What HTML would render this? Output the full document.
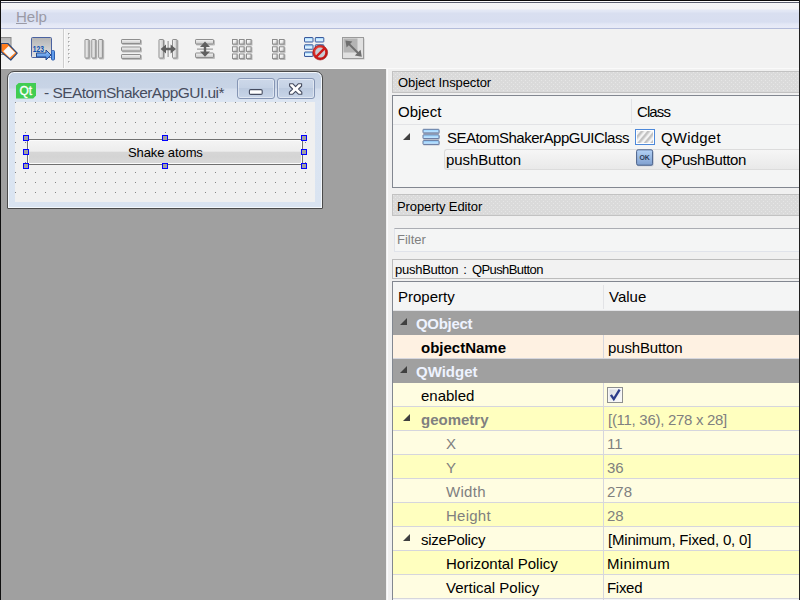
<!DOCTYPE html>
<html>
<head>
<meta charset="utf-8">
<title>Qt Designer</title>
<style>
html,body{margin:0;padding:0;}
body{width:800px;height:600px;overflow:hidden;position:relative;background:#f0f0f0;font-family:"Liberation Sans",sans-serif;font-size:15px;color:#000;}
.abs{position:absolute;}
.t{position:absolute;white-space:nowrap;line-height:1;}
/* top */
#topline{left:0;top:0;width:800px;height:1px;background:#080808;}
#leftline{left:0;top:0;width:1px;height:600px;background:#101010;}
#menubar{left:1px;top:3px;width:799px;height:25px;background:linear-gradient(#f5f6f7 0px,#f3f4f6 6px,#e4e8f5 7px,#e0e5f4 9px,#d9dff0 10px,#d8def0 19px,#e3e7f5 21px,#e8ebf7 25px);border-bottom:1px solid #b4bcda;}
#toolbar{left:1px;top:29px;width:799px;height:39px;background:#f2f2f2;border-bottom:1px solid #fafafa;}
#mdi{left:1px;top:69px;width:385px;height:531px;background:#a0a0a0;}
/* sub window */
#sub{left:7px;top:71px;width:314px;height:136px;border:1px solid #4a4a4a;border-radius:7px 7px 1px 1px;background:linear-gradient(#c4d1e3 0px,#c8d4e6 16px,#d4deed 17px,#dce5f2 30px,#dae4f1 136px);box-shadow:inset 0 0 0 1px #f4f8fc;}
#form{left:15px;top:102px;width:300px;height:100px;background-color:#f0f0f0;background-image:radial-gradient(circle at 0.5px 0.5px,#858585 0.55px,rgba(0,0,0,0) 0.85px);background-size:10px 10px;}
.wbtn{border:1px solid #8595b4;border-radius:3px;box-shadow:inset 0 0 0 1px rgba(255,255,255,.45);background:linear-gradient(#cdd8e9 0%,#c5d2e5 45%,#bccadf 50%,#c8d5e8 100%);}
#pbtn{left:27px;top:139px;width:274px;height:24px;border:1px solid #707070;border-radius:2px;background:linear-gradient(#f4f4f4 0%,#ededed 46%,#d6d6d6 52%,#d4d4d4 70%,#dadada 100%);box-shadow:inset 0 0 0 1px #fbfbfb;}
.h{position:absolute;width:4px;height:4px;border:1px solid #0000ff;background:#a0a0a0;}
/* docks */
.dockt{left:392px;width:407px;height:20px;background-color:#dadada;border:1px solid #c2c2c2;border-right:none;background-image:radial-gradient(circle at 0.5px 0.5px,#e6e6e6 0.6px,rgba(0,0,0,0) 0.9px),radial-gradient(circle at 2.5px 2.5px,#e6e6e6 0.6px,rgba(0,0,0,0) 0.9px);background-size:4px 4px;}
.view{left:392px;width:408px;background:#f4f5f5;border:1px solid #828790;border-right:none;}
.row{position:absolute;left:393px;width:407px;height:23px;border-bottom:1px solid #d6d6dd;}
.grp{position:absolute;left:393px;width:407px;height:24px;background:#a0a0a0;}
.vsep{position:absolute;left:603px;width:1px;background:#d6d6dd;}
.arrow{position:absolute;width:0;height:0;border-style:solid;border-width:0 0 7px 7px;border-color:transparent transparent #404040 transparent;}
.b{font-weight:bold;}
.g{color:#808080;}
</style>
</head>
<body>
<div id="menubar" class="abs"></div>
<div class="abs" style="left:1px;top:1px;width:799px;height:1px;background:#fdfdfd"></div><div class="abs" style="left:1px;top:2px;width:799px;height:1px;background:#5c6070"></div>
<div id="topline" class="abs"></div>
<div class="t" id="help" style="left:16px;top:9px;font-size:15px;color:#9a9aa6"><span style="text-decoration:underline">H</span>elp</div>
<div id="toolbar" class="abs"></div>
<div id="mdi" class="abs"></div>
<svg class="abs" style="left:0;top:28px" width="400" height="42" viewBox="0 28 400 42"><defs><linearGradient id="gv" x1="0" x2="1" y1="0" y2="0"><stop offset="0" stop-color="#f6f6f6"/><stop offset="1" stop-color="#c6c6c6"/></linearGradient><linearGradient id="gh" x1="0" x2="0" y1="0" y2="1"><stop offset="0" stop-color="#f6f6f6"/><stop offset="1" stop-color="#c6c6c6"/></linearGradient><linearGradient id="gb" x1="0" x2="0" y1="0" y2="1"><stop offset="0" stop-color="#8ccfff"/><stop offset="0.55" stop-color="#e4f5ff"/><stop offset="1" stop-color="#b4deff"/></linearGradient><linearGradient id="gg" x1="0" x2="0" y1="0" y2="1"><stop offset="0" stop-color="#b4b4b4"/><stop offset="1" stop-color="#e4e4e4"/></linearGradient><linearGradient id="ga" x1="0" x2="0" y1="0" y2="1"><stop offset="0" stop-color="#9ccaff"/><stop offset="1" stop-color="#3f7fd8"/></linearGradient><radialGradient id="gr" cx="0.4" cy="0.35" r="0.7"><stop offset="0" stop-color="#ff5a4a"/><stop offset="1" stop-color="#c01010"/></radialGradient><linearGradient id="gs" x1="0" x2="1" y1="0" y2="1"><stop offset="0" stop-color="#ffffff"/><stop offset="0.45" stop-color="#f0f0f0"/><stop offset="1" stop-color="#b8b8b8"/></linearGradient></defs><rect x="-6" y="37.5" width="17" height="17" fill="url(#gg)" stroke="#8a8a8a"/><path d="M1 43.5 L7.8 43.5 L17.2 53.1 L10.8 60 L1 51.8 Z" fill="#ff7d1e" stroke="#2c4a7c" stroke-width="1.2" stroke-linejoin="round"/><path d="M8.6 46 L15.2 52.8 L9.6 57.8 L3.2 51.2 Z" fill="#f8f8f8"/><rect x="31.5" y="37.5" width="20" height="20" fill="url(#gg)" stroke="#4a62a0" rx="1"/><text x="32.8" y="52" font-family="Liberation Sans, sans-serif" font-size="9" font-weight="bold" fill="#0d4fb0" textLength="11.2" lengthAdjust="spacingAndGlyphs">123</text><path d="M36.5 53 L46 53 L46 50 L51 55 L46 60 L46 57 L36.5 57 Z" fill="url(#ga)" stroke="#24498e" stroke-width="1" stroke-linejoin="round"/><rect x="51.5" y="50.5" width="3" height="9.5" fill="#5f9bea" stroke="#2f5fb0" stroke-width="1" rx="1"/><rect x="63" y="29" width="1" height="39" fill="#cdcdcd"/><rect x="64" y="29" width="1" height="39" fill="#fbfbfb"/><rect x="68" y="33" width="1.5" height="1.5" fill="#a8a8a8"/><rect x="69" y="34" width="1" height="1" fill="#ffffff"/><rect x="68" y="37" width="1.5" height="1.5" fill="#a8a8a8"/><rect x="69" y="38" width="1" height="1" fill="#ffffff"/><rect x="68" y="41" width="1.5" height="1.5" fill="#a8a8a8"/><rect x="69" y="42" width="1" height="1" fill="#ffffff"/><rect x="68" y="45" width="1.5" height="1.5" fill="#a8a8a8"/><rect x="69" y="46" width="1" height="1" fill="#ffffff"/><rect x="68" y="49" width="1.5" height="1.5" fill="#a8a8a8"/><rect x="69" y="50" width="1" height="1" fill="#ffffff"/><rect x="68" y="53" width="1.5" height="1.5" fill="#a8a8a8"/><rect x="69" y="54" width="1" height="1" fill="#ffffff"/><rect x="68" y="57" width="1.5" height="1.5" fill="#a8a8a8"/><rect x="69" y="58" width="1" height="1" fill="#ffffff"/><rect x="68" y="61" width="1.5" height="1.5" fill="#a8a8a8"/><rect x="69" y="62" width="1" height="1" fill="#ffffff"/><rect x="85.5" y="40" width="5" height="19.5" fill="#bdbdbd" rx="1"/><rect x="85.0" y="39.5" width="4" height="18.5" fill="url(#gv)" stroke="#8e8e8e" rx="0.6"/><rect x="92.3" y="40" width="5" height="19.5" fill="#bdbdbd" rx="1"/><rect x="91.8" y="39.5" width="4" height="18.5" fill="url(#gv)" stroke="#8e8e8e" rx="0.6"/><rect x="99.2" y="40" width="5" height="19.5" fill="#bdbdbd" rx="1"/><rect x="98.7" y="39.5" width="4" height="18.5" fill="url(#gv)" stroke="#8e8e8e" rx="0.6"/><rect x="122" y="40" width="20" height="5" fill="#bdbdbd" rx="1"/><rect x="121.5" y="39.5" width="19" height="4" fill="url(#gh)" stroke="#8e8e8e" rx="0.6"/><rect x="122" y="47.5" width="20" height="5" fill="#bdbdbd" rx="1"/><rect x="121.5" y="47.0" width="19" height="4" fill="url(#gh)" stroke="#8e8e8e" rx="0.6"/><rect x="122" y="55" width="20" height="5" fill="#bdbdbd" rx="1"/><rect x="121.5" y="54.5" width="19" height="4" fill="url(#gh)" stroke="#8e8e8e" rx="0.6"/><rect x="159.5" y="40" width="5.5" height="19.5" fill="#bdbdbd" rx="1"/><rect x="159.0" y="39.5" width="4.5" height="18.5" fill="url(#gv)" stroke="#8e8e8e" rx="0.6"/><rect x="173" y="40" width="5.5" height="19.5" fill="#bdbdbd" rx="1"/><rect x="172.5" y="39.5" width="4.5" height="18.5" fill="url(#gv)" stroke="#8e8e8e" rx="0.6"/><rect x="167.6" y="41" width="1" height="16" fill="#8a8a8a"/><path d="M160.6 49 L166 44.4 L166 47.8 L170.6 47.8 L170.6 44.4 L176 49 L170.6 53.6 L170.6 50.2 L166 50.2 L166 53.6 Z" fill="#606060"/><rect x="196" y="40" width="19" height="5.5" fill="#bdbdbd" rx="1"/><rect x="195.5" y="39.5" width="18" height="4.5" fill="url(#gh)" stroke="#8e8e8e" rx="0.6"/><rect x="196" y="53.5" width="19" height="5.5" fill="#bdbdbd" rx="1"/><rect x="195.5" y="53.0" width="18" height="4.5" fill="url(#gh)" stroke="#8e8e8e" rx="0.6"/><rect x="197" y="48.6" width="16" height="1" fill="#8a8a8a"/><path d="M205 41.6 L210 47 L206.2 47 L206.2 51.4 L210 51.4 L205 56.8 L200 51.4 L203.8 51.4 L203.8 47 L200 47 Z" fill="#606060"/><rect x="233.0" y="40.0" width="5.5" height="5.5" fill="#b9b9b9"/><rect x="232.5" y="39.5" width="4.6" height="4.6" fill="url(#gs)" stroke="#8c8c8c"/><rect x="233.0" y="47.3" width="5.5" height="5.5" fill="#b9b9b9"/><rect x="232.5" y="46.8" width="4.6" height="4.6" fill="url(#gs)" stroke="#8c8c8c"/><rect x="233.0" y="54.5" width="5.5" height="5.5" fill="#b9b9b9"/><rect x="232.5" y="54.0" width="4.6" height="4.6" fill="url(#gs)" stroke="#8c8c8c"/><rect x="240.0" y="40.0" width="5.5" height="5.5" fill="#b9b9b9"/><rect x="239.5" y="39.5" width="4.6" height="4.6" fill="url(#gs)" stroke="#8c8c8c"/><rect x="240.0" y="47.3" width="5.5" height="5.5" fill="#b9b9b9"/><rect x="239.5" y="46.8" width="4.6" height="4.6" fill="url(#gs)" stroke="#8c8c8c"/><rect x="240.0" y="54.5" width="5.5" height="5.5" fill="#b9b9b9"/><rect x="239.5" y="54.0" width="4.6" height="4.6" fill="url(#gs)" stroke="#8c8c8c"/><rect x="247.0" y="40.0" width="5.5" height="5.5" fill="#b9b9b9"/><rect x="246.5" y="39.5" width="4.6" height="4.6" fill="url(#gs)" stroke="#8c8c8c"/><rect x="247.0" y="47.3" width="5.5" height="5.5" fill="#b9b9b9"/><rect x="246.5" y="46.8" width="4.6" height="4.6" fill="url(#gs)" stroke="#8c8c8c"/><rect x="247.0" y="54.5" width="5.5" height="5.5" fill="#b9b9b9"/><rect x="246.5" y="54.0" width="4.6" height="4.6" fill="url(#gs)" stroke="#8c8c8c"/><rect x="273.0" y="40.0" width="5.5" height="5.5" fill="#b9b9b9"/><rect x="272.5" y="39.5" width="4.6" height="4.6" fill="url(#gs)" stroke="#8c8c8c"/><rect x="273.0" y="47.3" width="5.5" height="5.5" fill="#b9b9b9"/><rect x="272.5" y="46.8" width="4.6" height="4.6" fill="url(#gs)" stroke="#8c8c8c"/><rect x="273.0" y="54.5" width="5.5" height="5.5" fill="#b9b9b9"/><rect x="272.5" y="54.0" width="4.6" height="4.6" fill="url(#gs)" stroke="#8c8c8c"/><rect x="280.0" y="40.0" width="5.5" height="5.5" fill="#b9b9b9"/><rect x="279.5" y="39.5" width="4.6" height="4.6" fill="url(#gs)" stroke="#8c8c8c"/><rect x="280.0" y="47.3" width="5.5" height="5.5" fill="#b9b9b9"/><rect x="279.5" y="46.8" width="4.6" height="4.6" fill="url(#gs)" stroke="#8c8c8c"/><rect x="280.0" y="54.5" width="5.5" height="5.5" fill="#b9b9b9"/><rect x="279.5" y="54.0" width="4.6" height="4.6" fill="url(#gs)" stroke="#8c8c8c"/><rect x="304.5" y="37.5" width="8.5" height="4.5" fill="url(#gb)" stroke="#3c5a9c" rx="0.5"/><rect x="315.3" y="37.5" width="8.5" height="4.5" fill="url(#gb)" stroke="#3c5a9c" rx="0.5"/><rect x="304.5" y="44.8" width="8.5" height="4.5" fill="url(#gb)" stroke="#3c5a9c" rx="0.5"/><rect x="315.3" y="44.8" width="8.5" height="4.5" fill="url(#gb)" stroke="#3c5a9c" rx="0.5"/><rect x="304.5" y="52.0" width="8.5" height="4.5" fill="url(#gb)" stroke="#3c5a9c" rx="0.5"/><circle cx="320.2" cy="52.6" r="6.2" fill="#c8ccd4" stroke="url(#gr)" stroke-width="2.4"/><path d="M316 57 L324.5 48.4" stroke="#d01818" stroke-width="2.4"/><circle cx="320.2" cy="52.6" r="7.4" fill="none" stroke="#9a1010" stroke-width="0.6"/><rect x="343.5" y="38.5" width="21" height="21" fill="#c4c4c4"/><rect x="342.5" y="37.5" width="21" height="21" fill="#e0e0e0" stroke="#9a9a9a"/><rect x="343.5" y="38.5" width="14" height="14" fill="#b4b4b4"/><path d="M347.5 42.5 L359.5 54.5" stroke="#6e6e6e" stroke-width="2"/><path d="M345.4 40.4 L352.4 41.6 L346.6 47.4 Z" fill="#6e6e6e"/><path d="M361.8 56.8 L354.8 55.6 L360.6 49.8 Z" fill="#6e6e6e"/></svg>
<div id="leftline" class="abs"></div>
<div class="abs" style="left:387px;top:69px;width:1px;height:531px;background:#fafbfd"></div>

<!-- sub window -->
<div id="sub" class="abs"></div>
<div id="form" class="abs"></div>
<div class="t" id="title" style="left:44px;top:85px;font-size:15.5px;color:#474d5e;letter-spacing:-0.54px;">- SEAtomShakerAppGUI.ui*</div>
<div class="abs wbtn" style="left:237px;top:78px;width:36px;height:18.5px;"></div>
<div class="abs wbtn" style="left:277px;top:78px;width:36px;height:18.5px;"></div>
<svg class="abs" style="left:15px;top:82px" width="23" height="18" viewBox="15 82 23 18"><path d="M18.6 83 L36 83 L36 95.6 L33.2 98.6 L16 98.6 L16 85.6 Z" fill="#41cd52"/><text x="19.4" y="95.4" font-family="Liberation Sans, sans-serif" font-size="12.5" fill="#ffffff" stroke="#ffffff" stroke-width="0.35" textLength="12.6" lengthAdjust="spacingAndGlyphs">Qt</text></svg>
<svg class="abs" style="left:236px;top:77px" width="80" height="23" viewBox="236 77 80 23"><rect x="249.4" y="89.6" width="12.8" height="4.8" rx="1.2" fill="#ffffff" stroke="#454c60" stroke-width="1.1"/><path d="M289.6 83.8 L293 83.8 L295.6 86.6 L298.2 83.8 L301.6 83.8 L301.6 86 L298.6 89 L301.8 92.2 L301.8 94.2 L298.4 94.2 L295.6 91.4 L292.8 94.2 L289.4 94.2 L289.4 92.2 L292.6 89 L289.6 86 Z" fill="#ffffff" stroke="#454c60" stroke-width="1.1" stroke-linejoin="round"/></svg>
<div id="pbtn" class="abs"></div>
<div class="h" style="left:23px;top:135px"></div><div class="h" style="left:162px;top:135px"></div><div class="h" style="left:301px;top:135px"></div><div class="h" style="left:23px;top:149px"></div><div class="h" style="left:301px;top:149px"></div><div class="h" style="left:23px;top:163px"></div><div class="h" style="left:162px;top:163px"></div><div class="h" style="left:301px;top:163px"></div>
<div class="t" id="shake" style="left:128px;top:146px;font-size:13px;letter-spacing:-0.1px;">Shake atoms</div>

<!-- Object inspector -->
<div class="abs dockt" style="top:71px"></div>
<div class="t" id="oi" style="left:398px;top:76px;font-size:13px;letter-spacing:-0.1px;">Object Inspector</div>
<div class="abs view" style="top:95px;height:91px;"></div>
<div class="abs" style="left:393px;top:124px;width:407px;height:1px;background:#e2e3e6"></div>
<div class="abs" style="left:631px;top:99px;width:1px;height:24px;background:#e2e3e6"></div>
<div class="t" style="left:398px;top:104px;" id="h_obj">Object</div>
<div class="t" style="left:637px;top:104px;letter-spacing:-0.9px;" id="h_cls">Class</div>
<div class="abs" style="left:444px;top:149px;width:356px;height:19px;border:1px solid #dcdcdc;border-right:none;border-radius:3px 0 0 3px;background:linear-gradient(#f6f6f6,#e9e9e9)"></div>
<div class="arrow" style="left:403px;top:133px"></div>
<svg class="abs" style="left:420px;top:126px" width="240" height="44" viewBox="420 126 240 44"><defs><linearGradient id="tb" x1="0" x2="0" y1="0" y2="1"><stop offset="0" stop-color="#8fd0ff"/><stop offset="1" stop-color="#cfe9ff"/></linearGradient><linearGradient id="ok" x1="0" x2="0" y1="0" y2="1"><stop offset="0" stop-color="#b4d2f6"/><stop offset="1" stop-color="#7f9fcf"/></linearGradient><pattern id="stripe" width="5" height="5" patternUnits="userSpaceOnUse" patternTransform="rotate(40)"><rect width="5" height="5" fill="#f4f4f4"/><rect width="2.5" height="5" fill="#c2c2c2"/></pattern></defs><rect x="423.4" y="130.2" width="16" height="3.6" rx="0.5" fill="#8b93a6"/><rect x="423" y="129.3" width="16" height="3.6" rx="0.5" fill="url(#tb)" stroke="#67789e" stroke-width="1"/><rect x="423.4" y="135.7" width="16" height="3.8" rx="0.5" fill="#8b93a6"/><rect x="423" y="134.8" width="16" height="3.8" rx="0.5" fill="url(#tb)" stroke="#67789e" stroke-width="1"/><rect x="423.4" y="141.5" width="16" height="3.8" rx="0.5" fill="#8b93a6"/><rect x="423" y="140.6" width="16" height="3.8" rx="0.5" fill="url(#tb)" stroke="#67789e" stroke-width="1"/><rect x="635.5" y="129.5" width="19" height="15" fill="#ffffff" stroke="#4c88da" stroke-width="1"/><rect x="637" y="131" width="16" height="12" fill="url(#stripe)"/><rect x="637" y="150.6" width="16.5" height="15.6" rx="1.5" fill="#9aa8c0" opacity="0.6"/><rect x="636.6" y="149.8" width="16" height="15.4" rx="1.5" fill="url(#ok)" stroke="#4b6088" stroke-width="1"/><text x="639.4" y="160.4" font-family="Liberation Sans, sans-serif" font-size="7.5" font-weight="bold" fill="#2c3c58" textLength="10.4" lengthAdjust="spacingAndGlyphs">OK</text></svg>
<div class="t" style="left:447px;top:130px;letter-spacing:-0.5px;" id="r1o">SEAtomShakerAppGUIClass</div>
<div class="t" style="left:661px;top:130px;letter-spacing:0.2px;" id="r1c">QWidget</div>
<div class="t" style="left:446px;top:152px;letter-spacing:-0.1px;" id="r2o">pushButton</div>
<div class="t" style="left:661px;top:152px;letter-spacing:-0.38px;" id="r2c">QPushButton</div>

<!-- Property editor -->
<div class="abs dockt" style="top:194px"></div>
<div class="t" id="pe" style="left:397px;top:200px;font-size:13px;letter-spacing:-0.1px;">Property Editor</div>
<div class="abs" style="left:394px;top:228px;width:406px;height:22px;background:#f4f5f5;border:1px solid #e0e3ea;border-top-color:#abadb3;border-right:none"></div>
<div class="t g" style="left:397px;top:233px;font-size:13px;" id="filter">Filter</div>
<div class="abs" style="left:392px;top:259px;width:408px;height:18px;background:#f2f2f2;border:1px solid #bcbcbc;border-right:none"></div>
<div class="t" id="lbl" style="left:395px;top:263px;font-size:13px;letter-spacing:-0.25px;">pushButton&nbsp;<span style="margin-left:1.5px">:</span>&nbsp;<span style="margin-left:2px;letter-spacing:-0.58px">QPushButton</span></div>
<div class="abs view" style="top:281px;height:330px;"></div>
<div class="abs" style="left:393px;top:310px;width:407px;height:1px;background:#e2e3e6"></div>
<div class="abs" style="left:603px;top:285px;width:1px;height:24px;background:#e2e3e6"></div>
<div class="t" style="left:398px;top:289px;" id="h_prop">Property</div>
<div class="t" style="left:609px;top:289px;" id="h_val">Value</div>

<div class="grp" style="top:311px"></div>
<div class="row" style="top:335px;background:#fef1e2"></div>
<div class="grp" style="top:359px"></div>
<div class="row" style="top:383px;background:#fffde1"></div>
<div class="row" style="top:407px;background:#ffffbf"></div>
<div class="row" style="top:431px;background:#fffde1"></div>
<div class="row" style="top:455px;background:#ffffbf"></div>
<div class="row" style="top:479px;background:#fffde1"></div>
<div class="row" style="top:503px;background:#ffffbf"></div>
<div class="row" style="top:527px;background:#fffde1"></div>
<div class="row" style="top:551px;background:#ffffbf"></div>
<div class="row" style="top:575px;background:#fffde1"></div>
<div class="vsep" style="top:335px;height:24px"></div>
<div class="vsep" style="top:383px;height:217px"></div>

<div class="arrow" style="left:400px;top:318px"></div>
<div class="t b" style="left:416px;top:316px;color:#eef3ff;letter-spacing:-0.3px;" id="p_qobject">QObject</div>
<div class="t b" style="left:421px;top:340px;" id="p_objectName">objectName</div>
<div class="t" style="left:608px;top:340px;letter-spacing:-0.15px;" id="v_objectName">pushButton</div>
<div class="arrow" style="left:400px;top:366px"></div>
<div class="t b" style="left:416px;top:364px;color:#eef3ff" id="p_qwidget">QWidget</div>
<div class="t" style="left:421px;top:388px;" id="p_enabled">enabled</div>
<svg class="abs" style="left:606px;top:386px" width="18" height="18" viewBox="606 386 18 18"><defs><linearGradient id="cb" x1="0" x2="1" y1="0" y2="1"><stop offset="0" stop-color="#d6d9e0"/><stop offset="1" stop-color="#fafafa"/></linearGradient></defs><rect x="607.5" y="387.5" width="15" height="15" fill="#f7f7f7" stroke="#8e8f8f"/><rect x="609.5" y="389.5" width="11" height="11" fill="url(#cb)"/><path d="M610.9 394.8 L613.8 399.2 L619.6 389.6" fill="none" stroke="#2c3c8a" stroke-width="2.3" stroke-linejoin="miter"/></svg>
<div class="arrow" style="left:403px;top:414px"></div>
<div class="t b g" style="left:421px;top:412px;" id="p_geometry">geometry</div>
<div class="t g" style="left:608px;top:412px;letter-spacing:-0.29px;" id="v_geometry">[(11, 36), 278 x 28]</div>
<div class="t g" style="left:446px;top:436px;" id="p_x">X</div>
<div class="t g" style="left:607px;top:436px;" id="v_x">11</div>
<div class="t g" style="left:446px;top:460px;" id="p_y">Y</div>
<div class="t g" style="left:607px;top:460px;" id="v_y">36</div>
<div class="t g" style="left:446px;top:484px;letter-spacing:0.3px;" id="p_w">Width</div>
<div class="t g" style="left:607px;top:484px;" id="v_w">278</div>
<div class="t g" style="left:446px;top:508px;letter-spacing:0.25px;" id="p_h">Height</div>
<div class="t g" style="left:607px;top:508px;" id="v_h">28</div>
<div class="arrow" style="left:403px;top:534px"></div>
<div class="t" style="left:421px;top:532px;letter-spacing:-0.25px;" id="p_sp">sizePolicy</div>
<div class="t" style="left:608px;top:532px;letter-spacing:-0.2px;" id="v_sp">[Minimum, Fixed, 0, 0]</div>
<div class="t" style="left:446px;top:556px;" id="p_hp">Horizontal Policy</div>
<div class="t" style="left:607px;top:556px;letter-spacing:0.3px;" id="v_hp">Minimum</div>
<div class="t" style="left:446px;top:580px;" id="p_vp">Vertical Policy</div>
<div class="t" style="left:607px;top:580px;letter-spacing:-0.3px;" id="v_vp">Fixed</div>
<div class="abs" style="left:799px;top:0;width:1px;height:600px;background:#202020"></div>
</body>
</html>
